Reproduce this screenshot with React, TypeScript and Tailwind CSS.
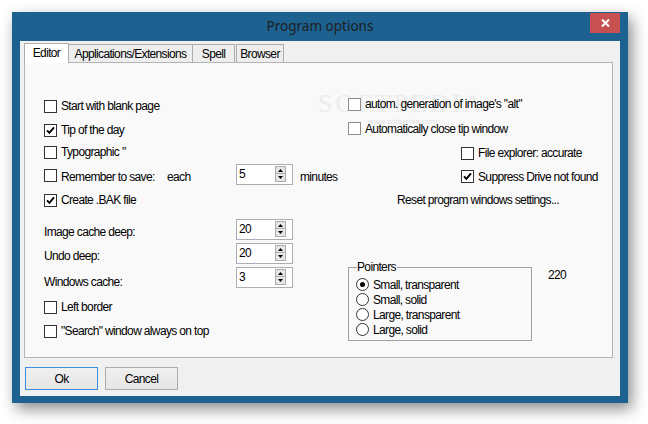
import React from "react";

const Check = ({ checked = false, flat = false }: { checked?: boolean; flat?: boolean }) => (
  <span
    className={
      flat
        ? "w-[13px] h-[13px] shrink-0 bg-white border border-[#8e8e8e] flex items-center justify-center"
        : "w-[13px] h-[13px] shrink-0 bg-white border border-[#333333] flex items-center justify-center"
    }
  >
    {checked && (
      <svg width="9" height="9" viewBox="0 0 9 9">
        <path d="M1 4.3 L3.4 6.8 L8 1.4" fill="none" stroke="#000" strokeWidth="1.9" />
      </svg>
    )}
  </span>
);

const CheckRow = ({
  label,
  checked,
  flat,
  h,
}: {
  label: string;
  checked?: boolean;
  flat?: boolean;
  h: string;
}) => (
  <div className={`flex items-center ${h}`}>
    <Check checked={checked} flat={flat} />
    <span className="ml-[4px] whitespace-nowrap">{label}</span>
  </div>
);

const Radio = ({ selected = false }: { selected?: boolean }) => (
  <span className="w-[13px] h-[13px] shrink-0 rounded-full bg-white border border-[#333333] flex items-center justify-center">
    {selected && <span className="w-[5px] h-[5px] rounded-full bg-black" />}
  </span>
);

const SpinBox = ({ value }: { value: string }) => (
  <div className="w-[57px] h-[21px] shrink-0 bg-white border border-[#abadb3] flex items-center pl-[2px] pr-[6px]">
    <span className="flex-1 leading-none">{value}</span>
    <div className="flex flex-col w-[11px]">
      <div className="h-[8px] bg-[#e6e6e6] border border-[#acacac] flex items-center justify-center">
        <svg width="5" height="3" viewBox="0 0 5 3">
          <path d="M0 3 L2.5 0 L5 3 Z" fill="#000" />
        </svg>
      </div>
      <div className="h-[8px] bg-[#e6e6e6] border border-t-0 border-[#acacac] flex items-center justify-center">
        <svg width="5" height="3" viewBox="0 0 5 3">
          <path d="M0 0 L5 0 L2.5 3 Z" fill="#000" />
        </svg>
      </div>
    </div>
  </div>
);

export default function App() {
  return (
    <div className="w-[648px] h-[424px] bg-white overflow-hidden pt-[12px] pl-[12px]">
      <div className="w-[616px] h-[391px] bg-[#1c6190] flex flex-col px-[8px] pb-[7px] shadow-[4px_6px_14px_rgba(0,0,0,0.45)]">
        {/* Title bar */}
        <div className="relative h-[29px] shrink-0 flex items-center justify-center">
          <span className="font-['Noto_Sans',sans-serif] text-[13.5px] text-[#1e1e1e]">Program options</span>
          <div className="absolute right-0 top-[1px] w-[30px] h-[20px] bg-[#c75050] flex items-center justify-center">
            <svg width="9" height="8" viewBox="0 0 9 8">
              <path d="M1 0.5 L8 7.5 M8 0.5 L1 7.5" stroke="#fff" strokeWidth="2" />
            </svg>
          </div>
        </div>

        {/* Client area */}
        <div className="flex-1 bg-[#f0f0f0] flex flex-col pl-[4px] pr-[7px] pt-[1px] font-['Liberation_Sans',Arial,sans-serif] text-[12px] tracking-[-0.65px] text-black">
          {/* Tabs */}
          <div className="h-[20px] flex items-end shrink-0">
            <div className="w-[45px] h-[20px] bg-white border border-b-0 border-[#acacac] flex items-center justify-center pb-[2px] relative z-10 -mb-px">
              Editor
            </div>
            <div className="w-[124px] h-[18px] bg-[#eeeeee] border border-l-0 border-b-0 border-[#acacac] flex items-center justify-center">
              Applications/Extensions
            </div>
            <div className="w-[42px] h-[18px] bg-[#eeeeee] border border-l-0 border-b-0 border-[#acacac] flex items-center justify-center">
              Spell
            </div>
            <div className="w-[48px] h-[18px] ml-[1px] bg-[#eeeeee] border border-b-0 border-[#acacac] flex items-center justify-center">
              Browser
            </div>
          </div>

          {/* Panel */}
          <div className="relative h-[296px] shrink-0 bg-[#f9f9f9] border border-[#b4b4b4] flex">
            {/* Watermark */}
            <div className="pointer-events-none absolute left-[293px] top-[28px] flex flex-col items-start">
              <span className="font-['Liberation_Serif',serif] text-[26px] tracking-[3px] leading-none text-[#ececec]">SOFTPEDIA</span>
              <span className="text-[8px] tracking-normal text-[#e4e4e4] ml-[50px] -mt-[1px]">www.softpedia.com</span>
            </div>

            {/* Left column */}
            <div className="w-[323px] shrink-0 pl-[19px] pt-[31px] flex flex-col relative">
              <CheckRow h="h-[24px]" label="Start with blank page" />
              <CheckRow h="h-[24px]" label="Tip of the day" checked />
              <CheckRow h="h-[20px]" label={'Typographic "'} />
              <div className="h-[26px] flex items-center">
                <Check />
                <span className="ml-[4px] w-[106px] whitespace-nowrap pt-[4px]">Remember to save:</span>
                <span className="w-[69px] pt-[4px]">each</span>
                <div className="-mt-[2px]">
                  <SpinBox value="5" />
                </div>
                <span className="ml-[7px] pt-[4px]">minutes</span>
              </div>
              <CheckRow h="h-[24px]" label="Create .BAK file" checked />
              <div className="h-[22px] mt-[6px] flex items-center">
                <span className="w-[192px] pt-[6px]">Image cache deep:</span>
                <SpinBox value="20" />
              </div>
              <div className="h-[22px] mt-[2px] flex items-center">
                <span className="w-[192px] pt-[6px]">Undo deep:</span>
                <SpinBox value="20" />
              </div>
              <div className="h-[22px] mt-[2px] flex items-center">
                <span className="w-[192px] pt-[9px]">Windows cache:</span>
                <SpinBox value="3" />
              </div>
              <CheckRow h="h-[24px] mt-[7px]" label="Left border" />
              <CheckRow h="h-[24px]" label={'"Search" window always on top'} />
            </div>

            {/* Right column */}
            <div className="flex-1 pt-[29px] flex flex-col relative">
              <CheckRow h="h-[24px]" label={'autom. generation of image\'s "alt"'} flat />
              <CheckRow h="h-[25px]" label="Automatically close tip window" flat />
              <div className="ml-[113px]">
                <CheckRow h="h-[24px]" label="File explorer: accurate" />
                <CheckRow h="h-[23px]" label="Suppress Drive not found" checked />
              </div>
              <div className="h-[24px] ml-[49px] flex items-center whitespace-nowrap">Reset program windows settings...</div>
              <div className="mt-[55px] flex items-start">
                <div className="relative w-[184px] h-[74px] border border-[#a0a0a0] pt-[9px] pl-[7px] flex flex-col">
                  <span className="absolute left-[8px] -top-[7px] bg-[#f9f9f9] leading-[13px] pr-[1px]">Pointers</span>
                  <div className="h-[15px] flex items-center">
                    <Radio selected />
                    <span className="ml-[4px]">Small, transparent</span>
                  </div>
                  <div className="h-[15px] flex items-center">
                    <Radio />
                    <span className="ml-[4px]">Small, solid</span>
                  </div>
                  <div className="h-[15px] flex items-center">
                    <Radio />
                    <span className="ml-[4px]">Large, transparent</span>
                  </div>
                  <div className="h-[15px] flex items-center">
                    <Radio />
                    <span className="ml-[4px]">Large, solid</span>
                  </div>
                </div>
                <span className="ml-[16px] -mt-[1px]">220</span>
              </div>
            </div>
          </div>

          {/* Buttons */}
          <div className="mt-[9px] flex gap-[7px] pl-[1px]">
            <button className="w-[73px] h-[23px] border border-[#3c8fe0] bg-gradient-to-b from-[#f0f0f0] to-[#e5e5e5] flex items-center justify-center">
              Ok
            </button>
            <button className="w-[73px] h-[23px] border border-[#adadad] bg-gradient-to-b from-[#f0f0f0] to-[#e5e5e5] flex items-center justify-center">
              Cancel
            </button>
          </div>
        </div>
      </div>
    </div>
  );
}
